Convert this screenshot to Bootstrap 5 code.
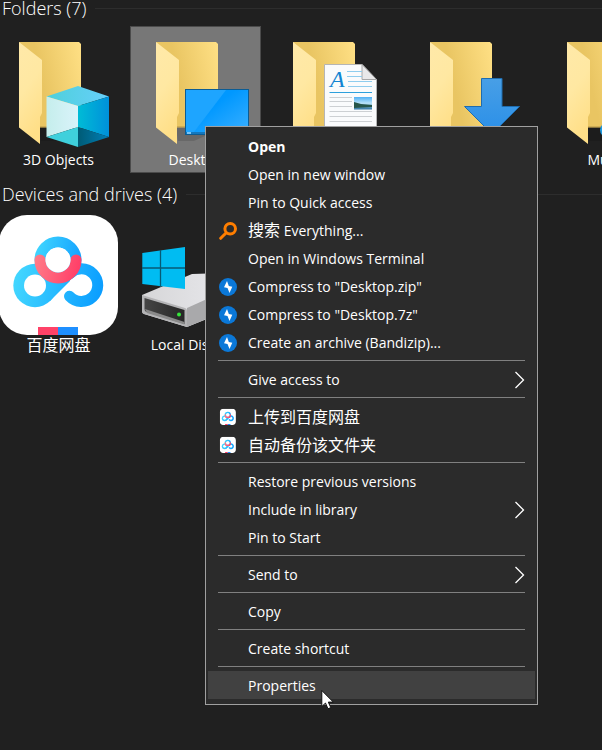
<!DOCTYPE html>
<html lang="en" data-bs-theme="dark">
<head>
<meta charset="utf-8">
<meta name="viewport" content="width=device-width, initial-scale=1">
<title>This PC</title>
<link href="https://cdn.jsdelivr.net/npm/bootstrap@5.3.0/dist/css/bootstrap.min.css" rel="stylesheet">
<style>
  body { background: #202020; color: #fff; font-family: "Open Sans", "Noto Sans CJK SC", sans-serif; font-size: 15px; line-height: 20px; }
  .group-title { font-size: 18px; font-weight: 300; line-height: 16px; padding-left: 2px; gap: 9px; }
  .group-title h2 { font: inherit; }
  .group-rule { height: 1px; background: #2d2d2d; }
  .drives { margin-top: 13px; }
  .tiles { gap: 6px; margin-left: -7px; padding-top: 10px; }
  .drives .tiles { padding-top: 9px; }
  .tile { flex: 0 0 131px; min-height: 147px; color: #fff; font-size: 14px; }
  .tile.selected { background: #777; box-shadow: inset 0 0 0 1px #4b4b4b; }
  .tile svg { width: 131px; height: 124px; }
  .tile .cjk, .entry .cjk { font-size: 16px; }
  .context { left: 205px; top: 126px; width: 333px; padding: 5px 2px; background: #2b2b2b; border: 1px solid #a0a0a0; }
  .entry { height: 28px; padding: 1px 10px 0 11px; color: #fff; background: transparent; border: 0; font-size: 14px; }
  .entry:hover, .entry.current { background: #414141; }
  .entry .glyph { width: 18px; height: 18px; margin-right: 11px; }
  .entry .chevron { width: 11px; height: 18px; }
  .divider { height: 1px; margin: 4px 10px; background: #808080; }
  .pointer { left: 113px; top: 18px; width: 14px; height: 21px; }
</style>
<script src="https://cdn.jsdelivr.net/npm/bootstrap@5.3.0/dist/js/bootstrap.bundle.min.js"></script>
</head>
<body>

<svg width="0" height="0" class="position-absolute" aria-hidden="true">
  <defs>
    <linearGradient id="gBack" x1="0" y1=".3" x2="1" y2="0"><stop offset=".3" stop-color="#e9c562"/><stop offset="1" stop-color="#ffe085"/></linearGradient>
    <linearGradient id="gFlap" x1="0" y1="0" x2=".3" y2="1"><stop offset="0" stop-color="#ffe9a9"/><stop offset=".5" stop-color="#ffe8a2"/><stop offset="1" stop-color="#ffdf88"/></linearGradient>
    <linearGradient id="gCubeR"><stop offset="0" stop-color="#00bcd6"/><stop offset="1" stop-color="#0090da"/></linearGradient>
    <linearGradient id="gCubeL"><stop offset="0" stop-color="#c5eeec"/><stop offset="1" stop-color="#daf3fa"/></linearGradient>
    <linearGradient id="gCubeT"><stop offset="0" stop-color="#4ed0da"/><stop offset="1" stop-color="#66cffa"/></linearGradient>
    <linearGradient id="gCubeB"><stop offset="0" stop-color="#005b75"/><stop offset="1" stop-color="#007fb8"/></linearGradient>
    <linearGradient id="gScreen" x1="0" y1="0" x2="1" y2="1"><stop offset=".4" stop-color="#0098ff"/><stop offset="1" stop-color="#3cb0ff"/></linearGradient>
    <linearGradient id="gArrow" x1="0" y1="0" x2="0" y2="1"><stop offset="0" stop-color="#489fe6"/><stop offset="1" stop-color="#2a8fe8"/></linearGradient>
    <linearGradient id="gPhoto" x1="0" y1="0" x2="0" y2="1"><stop offset="0" stop-color="#4fb0f5"/><stop offset=".5" stop-color="#b9e2f8"/><stop offset="1" stop-color="#2d72a0"/></linearGradient>
    <linearGradient id="gPan" gradientUnits="userSpaceOnUse" x1="14" y1="270" x2="103" y2="290"><stop offset="0" stop-color="#44d8ff"/><stop offset="1" stop-color="#0a9dff"/></linearGradient>
    <linearGradient id="gPanTop" gradientUnits="userSpaceOnUse" x1="36" y1="245" x2="80" y2="255"><stop offset="0" stop-color="#40d6ff"/><stop offset="1" stop-color="#16a4ff"/></linearGradient>
    <linearGradient id="gPanRed" gradientUnits="userSpaceOnUse" x1="36" y1="255" x2="80" y2="265"><stop offset="0" stop-color="#ff7b88"/><stop offset="1" stop-color="#ff3f68"/></linearGradient>
    <linearGradient id="gDisk" x1="0" y1="0" x2="1" y2="0"><stop offset="0" stop-color="#d6d6d8"/><stop offset="1" stop-color="#ececf0"/></linearGradient>
    <linearGradient id="gDiskFront"><stop offset="0" stop-color="#454545"/><stop offset="1" stop-color="#262626"/></linearGradient>
    <symbol id="folder" viewBox="0 0 131 124">
      <path d="M46 102h42l-2 3-22 10h-16z" fill="#000" opacity=".12"/>
      <path d="M26 16h60l2 2v83.500H46z" fill="url(#gBack)"/>
      <path d="M46 101h42" stroke="#8f753a" opacity=".6"/>
      <path d="M26 16l23 18v53l-2 4v27L26 101.500z" fill="url(#gFlap)"/>
    </symbol>
    <symbol id="netdisk" viewBox="-1 215 119 120">
      <rect x="-1" y="215" width="119" height="120" rx="28" fill="#fff"/>
      <circle cx="35" cy="285.500" r="21.700" fill="url(#gPan)"/>
      <path d="M50 301L70 281V262H40z" fill="url(#gPan)"/>
      <circle cx="35" cy="285.500" r="11" fill="#fff"/>
      <path d="M69.500 296.200A16.300 16.300 0 1 0 70 273.500" fill="none" stroke="url(#gPan)" stroke-width="11" stroke-linecap="round"/>
      <g fill="none" stroke-width="11" stroke-linecap="round">
        <circle stroke="url(#gPanTop)" cx="58" cy="260" r="18"/>
        <path stroke="url(#gPanRed)" d="M40 260a18 18 0 0 0 36 0"/>
      </g>
      <circle cx="58" cy="260" r="12.500" fill="#fff"/>
      <path d="M38 327h20v8H38z" fill="#ff4268"/><path d="M58 327h20v8H58z" fill="#1e8fff"/>
    </symbol>
    <symbol id="bolt" viewBox="0 0 18 18">
      <circle cx="9" cy="9" r="9" fill="#0b78d8"/>
      <path d="M8 3L5 9.300l3.500.7 2 5 2.800-6.300-3.500-.7z" fill="#fff"/>
    </symbol>
    <symbol id="more" viewBox="0 0 11 18">
      <path d="M1.500 1L9.500 9l-8 8" fill="none" stroke="#fff" stroke-width="1.300"/>
    </symbol>
  </defs>
</svg>

<main class="position-relative min-vh-100 overflow-hidden">
  <section>
    <div class="group-title d-flex align-items-center"><h2 class="m-0">Folders (7)</h2><span class="group-rule flex-grow-1"></span></div>
    <div class="tiles d-flex">
      <a href="#" class="tile d-flex flex-column align-items-center text-decoration-none">
        <svg viewBox="-7 26 131 124" aria-hidden="true">
          <use href="#folder" x="-7" y="26" width="131" height="124"/>
          <path d="M78 86l31 10.500-31 9.500-31.500-9.500z" fill="url(#gCubeT)"/>
          <path d="M46.500 96.500L78 106v21l-31.500 10z" fill="url(#gCubeL)"/>
          <path d="M109 96.500L78 106v21l31 10z" fill="url(#gCubeR)"/>
          <path d="M46.500 137L78 127v20z" fill="#3fd0dc"/>
          <path d="M109 137l-31-10v20z" fill="url(#gCubeB)"/>
        </svg>
        <span>3D Objects</span>
      </a>
      <a href="#" class="tile selected d-flex flex-column align-items-center text-decoration-none">
        <svg viewBox="130 26 131 124" aria-hidden="true">
          <use href="#folder" x="130" y="26" width="131" height="124"/>
          <rect x="185.500" y="89.500" width="63" height="45" fill="url(#gScreen)" stroke="#0b5c94"/>
          <path d="M186 90h40l-32 42h-8z" fill="#1ea5ff"/>
          <path d="M186 132h62v2h-62z" fill="#1478be"/><path d="M187 132h4v2h-4z" fill="#7cc6f5"/>
        </svg>
        <span>Desktop</span>
      </a>
      <a href="#" class="tile d-flex flex-column align-items-center text-decoration-none" aria-label="Documents">
        <svg viewBox="267 26 131 124" aria-hidden="true">
          <use href="#folder" x="267" y="26" width="131" height="124"/>
          <path d="M324.500 64.500H362l14.500 15V134h-52z" fill="#fafbfc" stroke="#b5b5b5"/>
          <path d="M362 64.500v15h14.500z" fill="#e9e9ea" stroke="#a8a8a8"/>
          <path d="M347 71.500h15M347 76.500h15M348 81.500h24M348 86.500h24" stroke="#8fcdee"/>
          <path d="M329.500 92.500h42.500" stroke="#2da0dc"/>
          <path d="M329.500 97.500H352M329.500 101.500H352M329.500 106.500H352M329.500 111.500H372M329.500 116.500H372M329.500 121.500H372" stroke="#cdd0d3"/>
          <path d="M354 97h18v12.500h-18z" fill="url(#gPhoto)"/><path d="M354 102l7 2 11 1v2l-18 1z" fill="#27564a"/>
          <text x="330" y="87" font-family="Liberation Serif, serif" font-style="italic" font-size="24" fill="#1285d2">A</text>
        </svg>
      </a>
      <a href="#" class="tile d-flex flex-column align-items-center text-decoration-none" aria-label="Downloads">
        <svg viewBox="404 26 131 124" aria-hidden="true">
          <use href="#folder" x="404" y="26" width="131" height="124"/>
          <path d="M481.500 78.500h20.500v28h17.500L492 134l-27.500-27.500h17z" fill="url(#gArrow)" stroke="#1f6cae"/>
        </svg>
      </a>
      <a href="#" class="tile d-flex flex-column align-items-center text-decoration-none">
        <svg viewBox="541 26 131 124" aria-hidden="true">
          <use href="#folder" x="541" y="26" width="131" height="124"/>
          <circle cx="607" cy="130" r="7" fill="#1f9ae0"/>
        </svg>
        <span>Music</span>
      </a>
    </div>
  </section>

  <section class="drives">
    <div class="group-title d-flex align-items-center"><h2 class="m-0">Devices and drives (4)</h2><span class="group-rule flex-grow-1"></span></div>
    <div class="tiles d-flex">
      <a href="#" class="tile d-flex flex-column align-items-center text-decoration-none">
        <svg viewBox="-7 211 131 124" aria-hidden="true"><use href="#netdisk" x="-1" y="215" width="119" height="120"/></svg>
        <span class="cjk">百度网盘</span>
      </a>
      <a href="#" class="tile d-flex flex-column align-items-center text-decoration-none">
        <svg viewBox="130 211 131 124" aria-hidden="true">
          <path d="M142 295l50-21 16-.5 40 8-3 22-58 23.500-43-13q-2-.5-2-3z" fill="url(#gDisk)"/>
          <path d="M187 308l60-27-2 22-58 24z" fill="#a9a9ab"/>
          <path d="M142 295l43 13q2 .5 2 3v16l-43-13q-2-.5-2-3z" fill="#b4b4b6"/>
          <path d="M144.500 298l40 12v14l-38-12q-2-.5-2-3z" fill="url(#gDiskFront)"/>
          <path d="M145 309l39.500 13v2.500L147 313z" fill="#8a8a8a"/>
          <circle cx="179" cy="314.500" r="2" fill="#35e63a"/>
          <path d="M142.300 253L185 247v42l-42.700-5z" fill="#00bcf2"/>
          <path d="M160.500 250v37M142 268h43" stroke="#075a75" stroke-width="1.300"/>
        </svg>
        <span>Local Disk (C:)</span>
      </a>
    </div>
  </section>

  <div class="context position-absolute" role="menu">
    <button class="entry w-100 d-flex align-items-center fw-bold" role="menuitem"><span class="glyph"></span>Open</button>
    <button class="entry w-100 d-flex align-items-center" role="menuitem"><span class="glyph"></span>Open in new window</button>
    <button class="entry w-100 d-flex align-items-center" role="menuitem"><span class="glyph"></span>Pin to Quick access</button>
    <button class="entry w-100 d-flex align-items-center" role="menuitem">
      <svg class="glyph" viewBox="0 0 18 18" aria-hidden="true"><g fill="none" stroke="#ff7e00"><circle cx="11.200" cy="6.800" r="5.300" stroke-width="3"/><path d="M7 11l-5.300 5.300" stroke-width="3" stroke-linecap="round"/></g></svg>
      <span><span class="cjk">搜索</span> Everything...</span></button>
    <button class="entry w-100 d-flex align-items-center" role="menuitem"><span class="glyph"></span>Open in Windows Terminal</button>
    <button class="entry w-100 d-flex align-items-center" role="menuitem"><svg class="glyph" aria-hidden="true"><use href="#bolt"/></svg>Compress to "Desktop.zip"</button>
    <button class="entry w-100 d-flex align-items-center" role="menuitem"><svg class="glyph" aria-hidden="true"><use href="#bolt"/></svg>Compress to "Desktop.7z"</button>
    <button class="entry w-100 d-flex align-items-center" role="menuitem"><svg class="glyph" aria-hidden="true"><use href="#bolt"/></svg>Create an archive (Bandizip)...</button>
    <div class="divider" role="separator"></div>
    <button class="entry w-100 d-flex align-items-center" role="menuitem"><span class="glyph"></span>Give access to<svg class="chevron ms-auto" aria-hidden="true"><use href="#more"/></svg></button>
    <div class="divider" role="separator"></div>
    <button class="entry w-100 d-flex align-items-center" role="menuitem"><svg class="glyph" viewBox="-7 209 133 133" aria-hidden="true"><use href="#netdisk" x="-1" y="215" width="119" height="120"/></svg><span class="cjk">上传到百度网盘</span></button>
    <button class="entry w-100 d-flex align-items-center" role="menuitem"><svg class="glyph" viewBox="-7 209 133 133" aria-hidden="true"><use href="#netdisk" x="-1" y="215" width="119" height="120"/></svg><span class="cjk">自动备份该文件夹</span></button>
    <div class="divider" role="separator"></div>
    <button class="entry w-100 d-flex align-items-center" role="menuitem"><span class="glyph"></span>Restore previous versions</button>
    <button class="entry w-100 d-flex align-items-center" role="menuitem"><span class="glyph"></span>Include in library<svg class="chevron ms-auto" aria-hidden="true"><use href="#more"/></svg></button>
    <button class="entry w-100 d-flex align-items-center" role="menuitem"><span class="glyph"></span>Pin to Start</button>
    <div class="divider" role="separator"></div>
    <button class="entry w-100 d-flex align-items-center" role="menuitem"><span class="glyph"></span>Send to<svg class="chevron ms-auto" aria-hidden="true"><use href="#more"/></svg></button>
    <div class="divider" role="separator"></div>
    <button class="entry w-100 d-flex align-items-center" role="menuitem"><span class="glyph"></span>Copy</button>
    <div class="divider" role="separator"></div>
    <button class="entry w-100 d-flex align-items-center" role="menuitem"><span class="glyph"></span>Create shortcut</button>
    <div class="divider" role="separator"></div>
    <button class="entry current position-relative w-100 d-flex align-items-center" role="menuitem"><span class="glyph"></span>Properties
      <svg class="pointer position-absolute" viewBox="0 0 14 21" aria-hidden="true"><path d="M.8 1.500v16l3.700-3.400 2.500 5.700 2.800-1.200-2.500-5.500h5z" fill="#fff" stroke="#111"/></svg></button>
  </div>
</main>
</body>
</html>
